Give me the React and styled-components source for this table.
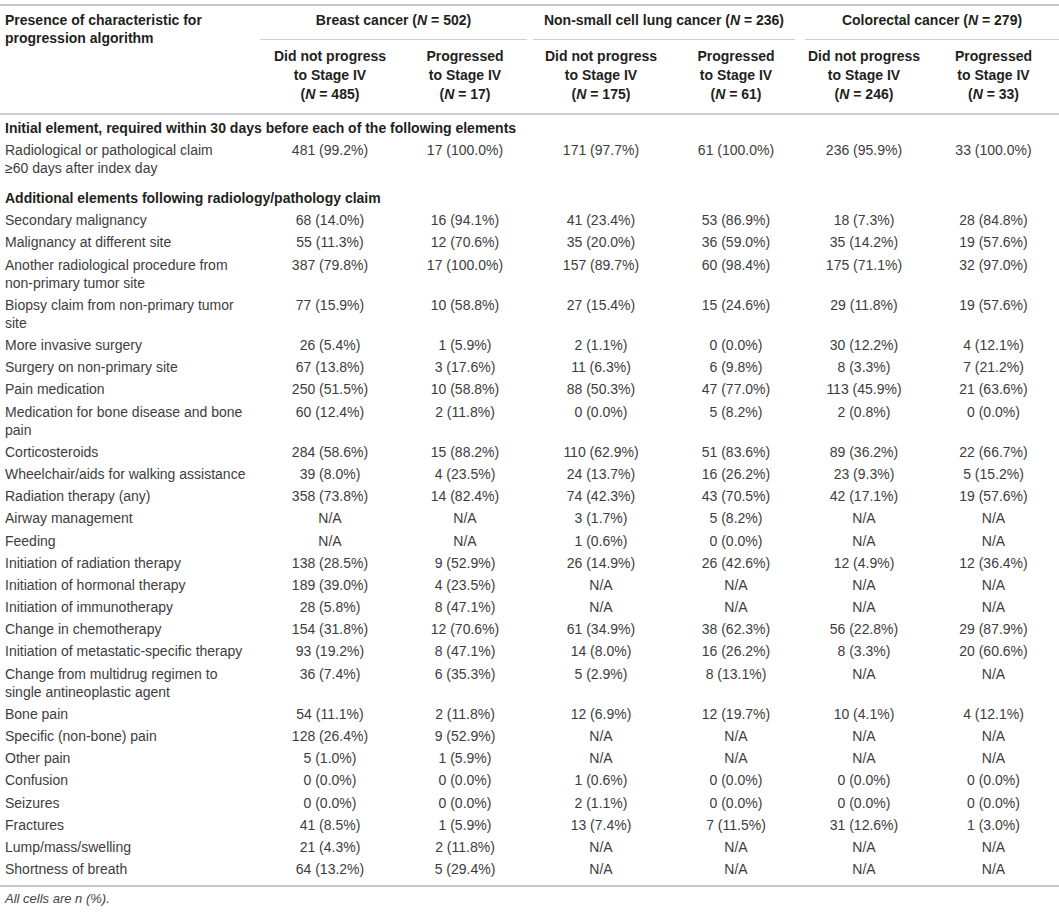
import React from "react";
import styled, { createGlobalStyle } from "styled-components";

const GlobalStyle = createGlobalStyle`
  html, body {
    margin: 0;
    padding: 0;
    background: #ffffff;
  }
  body {
    font-family: "Liberation Sans", Arial, Helvetica, sans-serif;
    color: #3d3d3d;
  }
`;

const COLS = "260px 140px 130px 142px 128px 128px 1fr";

const Page = styled.div`
  width: 1059px;
  padding-top: 4px;
`;

const Table = styled.div`
  border-top: 2px solid #c8c8c8;
  border-bottom: 2px solid #c8c8c8;
  font-size: 14px;
`;

const HeaderGrid = styled.div`
  display: grid;
  grid-template-columns: ${COLS};
  border-bottom: 2px solid #cfcfcf;
  color: #231f20;
  font-weight: 700;
`;

const HeadLabel = styled.div`
  grid-row: 1 / span 2;
  grid-column: 1;
  padding: 5px 10px 0 5px;
  line-height: 18px;
`;

const GroupHead = styled.div`
  grid-column: span 2;
  text-align: center;
  padding: 5px 0 10px;
  line-height: 18px;
  border-bottom: 1.5px solid #cfcfcf;
  margin: ${(p) => p.$margin || "0"};
`;

const SubHead = styled.div`
  text-align: center;
  padding: 7px 4px 9px;
  line-height: 19px;
`;

const Body = styled.div`
  padding-bottom: 5px;
`;

const SectionRow = styled.div`
  padding: ${(p) => (p.$first ? "4px" : "10px")} 5px 2px;
  line-height: 18px;
  font-weight: 700;
  color: #231f20;
`;

const Row = styled.div`
  display: grid;
  grid-template-columns: ${COLS};
  line-height: 18px;
`;

const Label = styled.div`
  padding: 2.1px 10px 2.1px 5px;
`;

const Cell = styled.div`
  padding: 2.1px 2px;
  text-align: center;
`;

const Footer = styled.div`
  padding: 3px 5px;
  line-height: 18px;
  font-size: 13px;
  font-style: italic;
  color: #454545;
`;

const Ital = styled.i`
  font-style: italic;
`;

const N = ({ v }) => (
  <>
    (<Ital>N</Ital> = {v})
  </>
);

const NA = "N/A";

const rows = [
  ["Secondary malignancy", ["68 (14.0%)", "16 (94.1%)", "41 (23.4%)", "53 (86.9%)", "18 (7.3%)", "28 (84.8%)"]],
  ["Malignancy at different site", ["55 (11.3%)", "12 (70.6%)", "35 (20.0%)", "36 (59.0%)", "35 (14.2%)", "19 (57.6%)"]],
  ["Another radiological procedure from non-primary tumor site", ["387 (79.8%)", "17 (100.0%)", "157 (89.7%)", "60 (98.4%)", "175 (71.1%)", "32 (97.0%)"]],
  ["Biopsy claim from non-primary tumor site", ["77 (15.9%)", "10 (58.8%)", "27 (15.4%)", "15 (24.6%)", "29 (11.8%)", "19 (57.6%)"]],
  ["More invasive surgery", ["26 (5.4%)", "1 (5.9%)", "2 (1.1%)", "0 (0.0%)", "30 (12.2%)", "4 (12.1%)"]],
  ["Surgery on non-primary site", ["67 (13.8%)", "3 (17.6%)", "11 (6.3%)", "6 (9.8%)", "8 (3.3%)", "7 (21.2%)"]],
  ["Pain medication", ["250 (51.5%)", "10 (58.8%)", "88 (50.3%)", "47 (77.0%)", "113 (45.9%)", "21 (63.6%)"]],
  ["Medication for bone disease and bone pain", ["60 (12.4%)", "2 (11.8%)", "0 (0.0%)", "5 (8.2%)", "2 (0.8%)", "0 (0.0%)"]],
  ["Corticosteroids", ["284 (58.6%)", "15 (88.2%)", "110 (62.9%)", "51 (83.6%)", "89 (36.2%)", "22 (66.7%)"]],
  ["Wheelchair/aids for walking assistance", ["39 (8.0%)", "4 (23.5%)", "24 (13.7%)", "16 (26.2%)", "23 (9.3%)", "5 (15.2%)"]],
  ["Radiation therapy (any)", ["358 (73.8%)", "14 (82.4%)", "74 (42.3%)", "43 (70.5%)", "42 (17.1%)", "19 (57.6%)"]],
  ["Airway management", [NA, NA, "3 (1.7%)", "5 (8.2%)", NA, NA]],
  ["Feeding", [NA, NA, "1 (0.6%)", "0 (0.0%)", NA, NA]],
  ["Initiation of radiation therapy", ["138 (28.5%)", "9 (52.9%)", "26 (14.9%)", "26 (42.6%)", "12 (4.9%)", "12 (36.4%)"]],
  ["Initiation of hormonal therapy", ["189 (39.0%)", "4 (23.5%)", NA, NA, NA, NA]],
  ["Initiation of immunotherapy", ["28 (5.8%)", "8 (47.1%)", NA, NA, NA, NA]],
  ["Change in chemotherapy", ["154 (31.8%)", "12 (70.6%)", "61 (34.9%)", "38 (62.3%)", "56 (22.8%)", "29 (87.9%)"]],
  ["Initiation of metastatic-specific therapy", ["93 (19.2%)", "8 (47.1%)", "14 (8.0%)", "16 (26.2%)", "8 (3.3%)", "20 (60.6%)"]],
  ["Change from multidrug regimen to single antineoplastic agent", ["36 (7.4%)", "6 (35.3%)", "5 (2.9%)", "8 (13.1%)", NA, NA]],
  ["Bone pain", ["54 (11.1%)", "2 (11.8%)", "12 (6.9%)", "12 (19.7%)", "10 (4.1%)", "4 (12.1%)"]],
  ["Specific (non-bone) pain", ["128 (26.4%)", "9 (52.9%)", NA, NA, NA, NA]],
  ["Other pain", ["5 (1.0%)", "1 (5.9%)", NA, NA, NA, NA]],
  ["Confusion", ["0 (0.0%)", "0 (0.0%)", "1 (0.6%)", "0 (0.0%)", "0 (0.0%)", "0 (0.0%)"]],
  ["Seizures", ["0 (0.0%)", "0 (0.0%)", "2 (1.1%)", "0 (0.0%)", "0 (0.0%)", "0 (0.0%)"]],
  ["Fractures", ["41 (8.5%)", "1 (5.9%)", "13 (7.4%)", "7 (11.5%)", "31 (12.6%)", "1 (3.0%)"]],
  ["Lump/mass/swelling", ["21 (4.3%)", "2 (11.8%)", NA, NA, NA, NA]],
  ["Shortness of breath", ["64 (13.2%)", "5 (29.4%)", NA, NA, NA, NA]],
];

const subHeads = [
  ["Did not progress", "485"],
  ["Progressed", "17"],
  ["Did not progress", "175"],
  ["Progressed", "61"],
  ["Did not progress", "246"],
  ["Progressed", "33"],
];

export default function App() {
  return (
    <Page>
      <GlobalStyle />
      <Table>
        <HeaderGrid>
          <HeadLabel>Presence of characteristic for progression algorithm</HeadLabel>
          <GroupHead $margin="0 3px 0 0">
            Breast cancer <N v="502" />
          </GroupHead>
          <GroupHead $margin="0 5px 0 3px">
            Non-small cell lung cancer <N v="236" />
          </GroupHead>
          <GroupHead $margin="0 0 0 5px">
            Colorectal cancer <N v="279" />
          </GroupHead>
          {subHeads.map(([t, n], i) => (
            <SubHead key={i}>
              {t}
              <br />
              to Stage IV
              <br />
              <N v={n} />
            </SubHead>
          ))}
        </HeaderGrid>
        <Body>
          <SectionRow $first>
            Initial element, required within 30 days before each of the following elements
          </SectionRow>
          <Row>
            <Label>
              Radiological or pathological claim
              <br />
              ≥60 days after index day
            </Label>
            {["481 (99.2%)", "17 (100.0%)", "171 (97.7%)", "61 (100.0%)", "236 (95.9%)", "33 (100.0%)"].map(
              (v, i) => (
                <Cell key={i}>{v}</Cell>
              )
            )}
          </Row>
          <SectionRow>Additional elements following radiology/pathology claim</SectionRow>
          {rows.map(([label, vals]) => (
            <Row key={label}>
              <Label>{label}</Label>
              {vals.map((v, i) => (
                <Cell key={i}>{v}</Cell>
              ))}
            </Row>
          ))}
        </Body>
      </Table>
      <Footer>All cells are n (%).</Footer>
    </Page>
  );
}
